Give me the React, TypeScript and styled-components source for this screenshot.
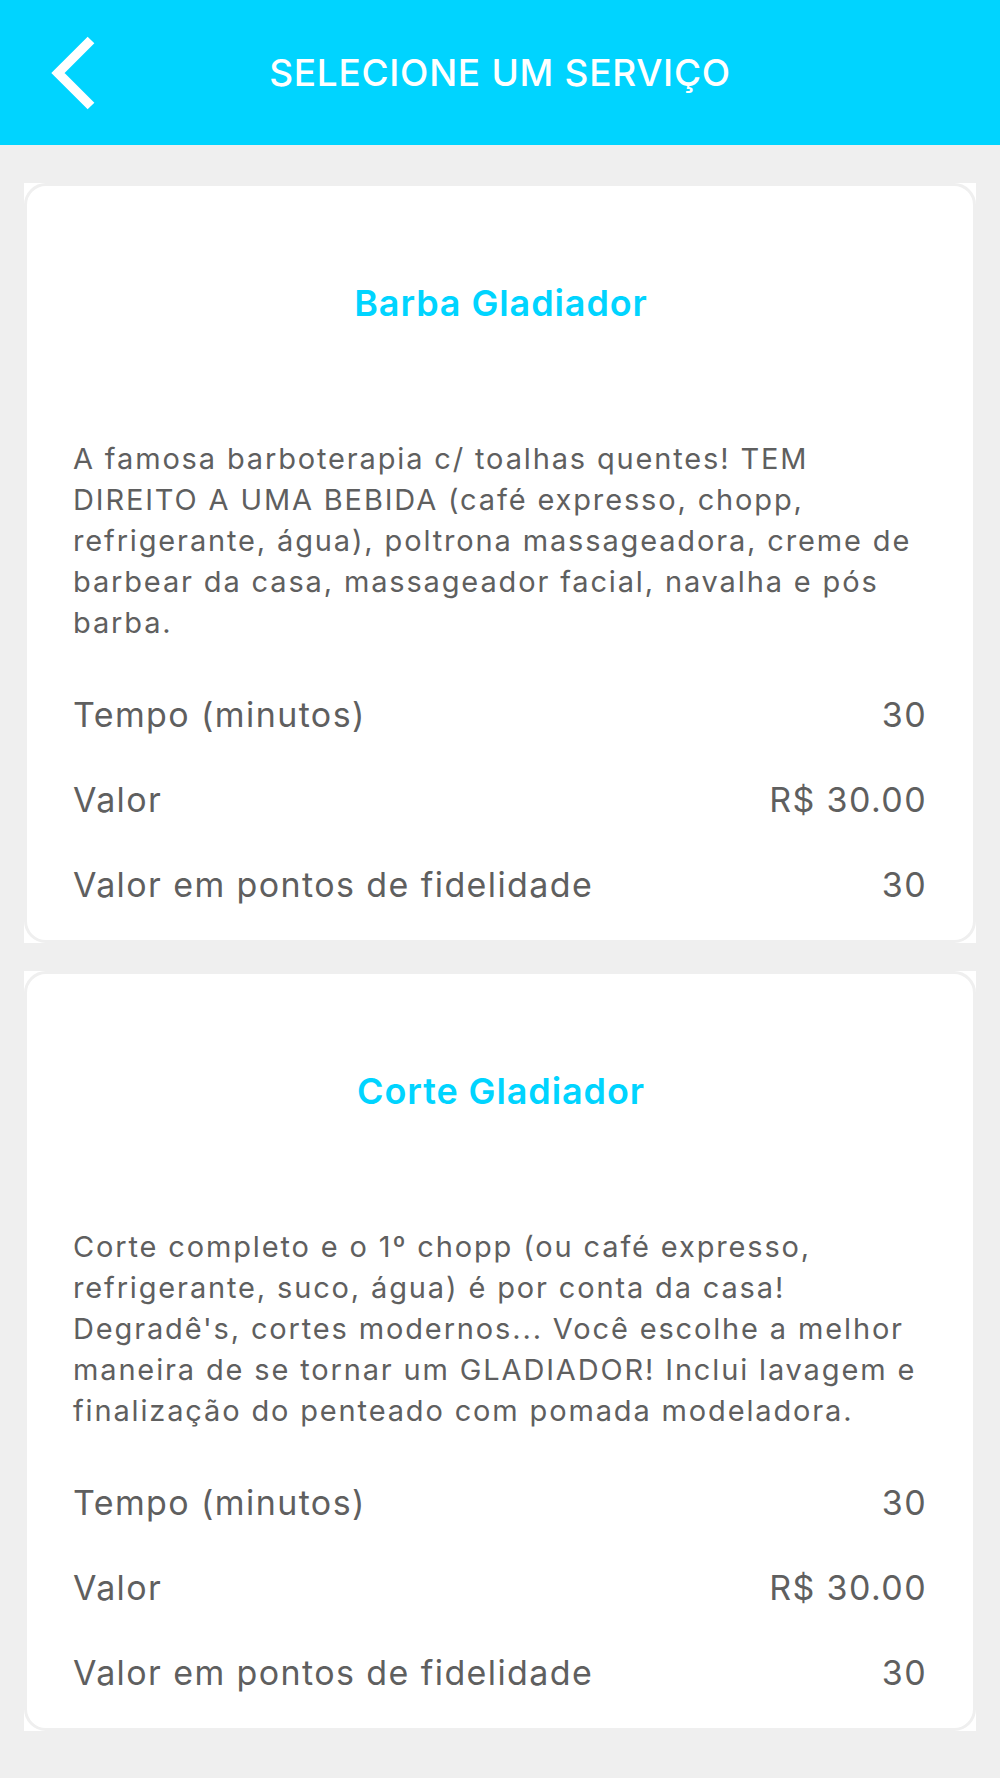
import styled, { createGlobalStyle } from "styled-components";

const COLORS = {
    cyan: "#00d4ff",
    page: "#efefef",
    text: "#5f5f5f",
    white: "#ffffff",
};

const GlobalStyle = createGlobalStyle`
    html, body {
        margin: 0;
        padding: 0;
        background: ${COLORS.page};
        font-family: Inter, "Liberation Sans", Arial, sans-serif;
    }

    * {
        box-sizing: border-box;
    }
`;

const PageLayout = styled.div`
    display: flex;
    flex-direction: column;
    width: 100%;
    min-height: 100vh;
    background: ${COLORS.page};
`;

const Header = styled.header`
    display: grid;
    grid-template-columns: 1fr auto 1fr;
    align-items: center;
    height: 145px;
    padding-left: 46px;
    background: ${COLORS.cyan};
`;

const BackButton = styled.button`
    display: flex;
    justify-self: start;
    padding: 0;
    border: none;
    background: none;
    cursor: pointer;
`;

const HeaderTitle = styled.h1`
    margin: 0 0 0 -46px;
    font-size: 37px;
    font-weight: 500;
    letter-spacing: 0.7px;
    color: ${COLORS.white};
`;

const ServiceList = styled.main`
    display: flex;
    flex-direction: column;
    gap: 28px;
    padding: 38px 24px;
`;

const CardFrame = styled.section`
    background: ${COLORS.white};
`;

const CardBody = styled.div`
    display: flex;
    flex-direction: column;
    padding: 95px 44px 13px 46px;
    border: 3px solid ${COLORS.page};
    border-radius: 22px;
`;

const ServiceName = styled.h2`
    margin: 0;
    font-size: 36px;
    line-height: 44px;
    font-weight: 600;
    letter-spacing: 0.9px;
    text-align: center;
    color: ${COLORS.cyan};
`;

const ServiceDescription = styled.p`
    margin: 113px 0 29px 0;
    font-size: 29px;
    line-height: 41px;
    font-weight: 400;
    letter-spacing: 1.85px;
    white-space: pre-line;
    color: ${COLORS.text};
`;

const InfoRow = styled.div`
    display: flex;
    justify-content: space-between;
    height: 85px;
    margin-right: 2px;
    line-height: 85px;
    font-size: 34px;
    letter-spacing: 1.4px;
    color: ${COLORS.text};
`;

type Service = {
    name: string;
    description: string;
    minutes: number;
    price: string;
    points: number;
};

const services: Service[] = [
    {
        name: "Barba Gladiador",
        description: [
            "A famosa barboterapia c/ toalhas quentes! TEM",
            "DIREITO A UMA BEBIDA (café expresso, chopp,",
            "refrigerante, água), poltrona massageadora, creme de",
            "barbear da casa, massageador facial, navalha e pós",
            "barba.",
        ].join("\n"),
        minutes: 30,
        price: "R$ 30.00",
        points: 30,
    },
    {
        name: "Corte Gladiador",
        description: [
            "Corte completo e o 1º chopp (ou café expresso,",
            "refrigerante, suco, água) é por conta da casa!",
            "Degradê's, cortes modernos... Você escolhe a melhor",
            "maneira de se tornar um GLADIADOR! Inclui lavagem e",
            "finalização do penteado com pomada modeladora.",
        ].join("\n"),
        minutes: 30,
        price: "R$ 30.00",
        points: 30,
    },
];

function BackIcon() {
    return (
        <svg width="54" height="80" viewBox="0 0 54 80">
            <polyline
                points="45,7 12,40 45,73"
                fill="none"
                stroke={COLORS.white}
                strokeWidth="9.5"
                strokeLinecap="butt"
                strokeLinejoin="miter"
            />
        </svg>
    );
}

function ServiceCard({ service }: { service: Service }) {
    return (
        <CardFrame>
            <CardBody>
                <ServiceName>{service.name}</ServiceName>
                <ServiceDescription>{service.description}</ServiceDescription>
                <InfoRow>
                    <span>Tempo (minutos)</span>
                    <span>{service.minutes}</span>
                </InfoRow>
                <InfoRow>
                    <span>Valor</span>
                    <span>{service.price}</span>
                </InfoRow>
                <InfoRow>
                    <span>Valor em pontos de fidelidade</span>
                    <span>{service.points}</span>
                </InfoRow>
            </CardBody>
        </CardFrame>
    );
}

function App() {
    return (
        <>
            <GlobalStyle />
            <PageLayout>
                <Header>
                    <BackButton aria-label="Voltar" title="Voltar">
                        <BackIcon />
                    </BackButton>
                    <HeaderTitle>SELECIONE UM SERVIÇO</HeaderTitle>
                    <span />
                </Header>
                <ServiceList>
                    {services.map((service) => (
                        <ServiceCard key={service.name} service={service} />
                    ))}
                </ServiceList>
            </PageLayout>
        </>
    );
}

export default App;
